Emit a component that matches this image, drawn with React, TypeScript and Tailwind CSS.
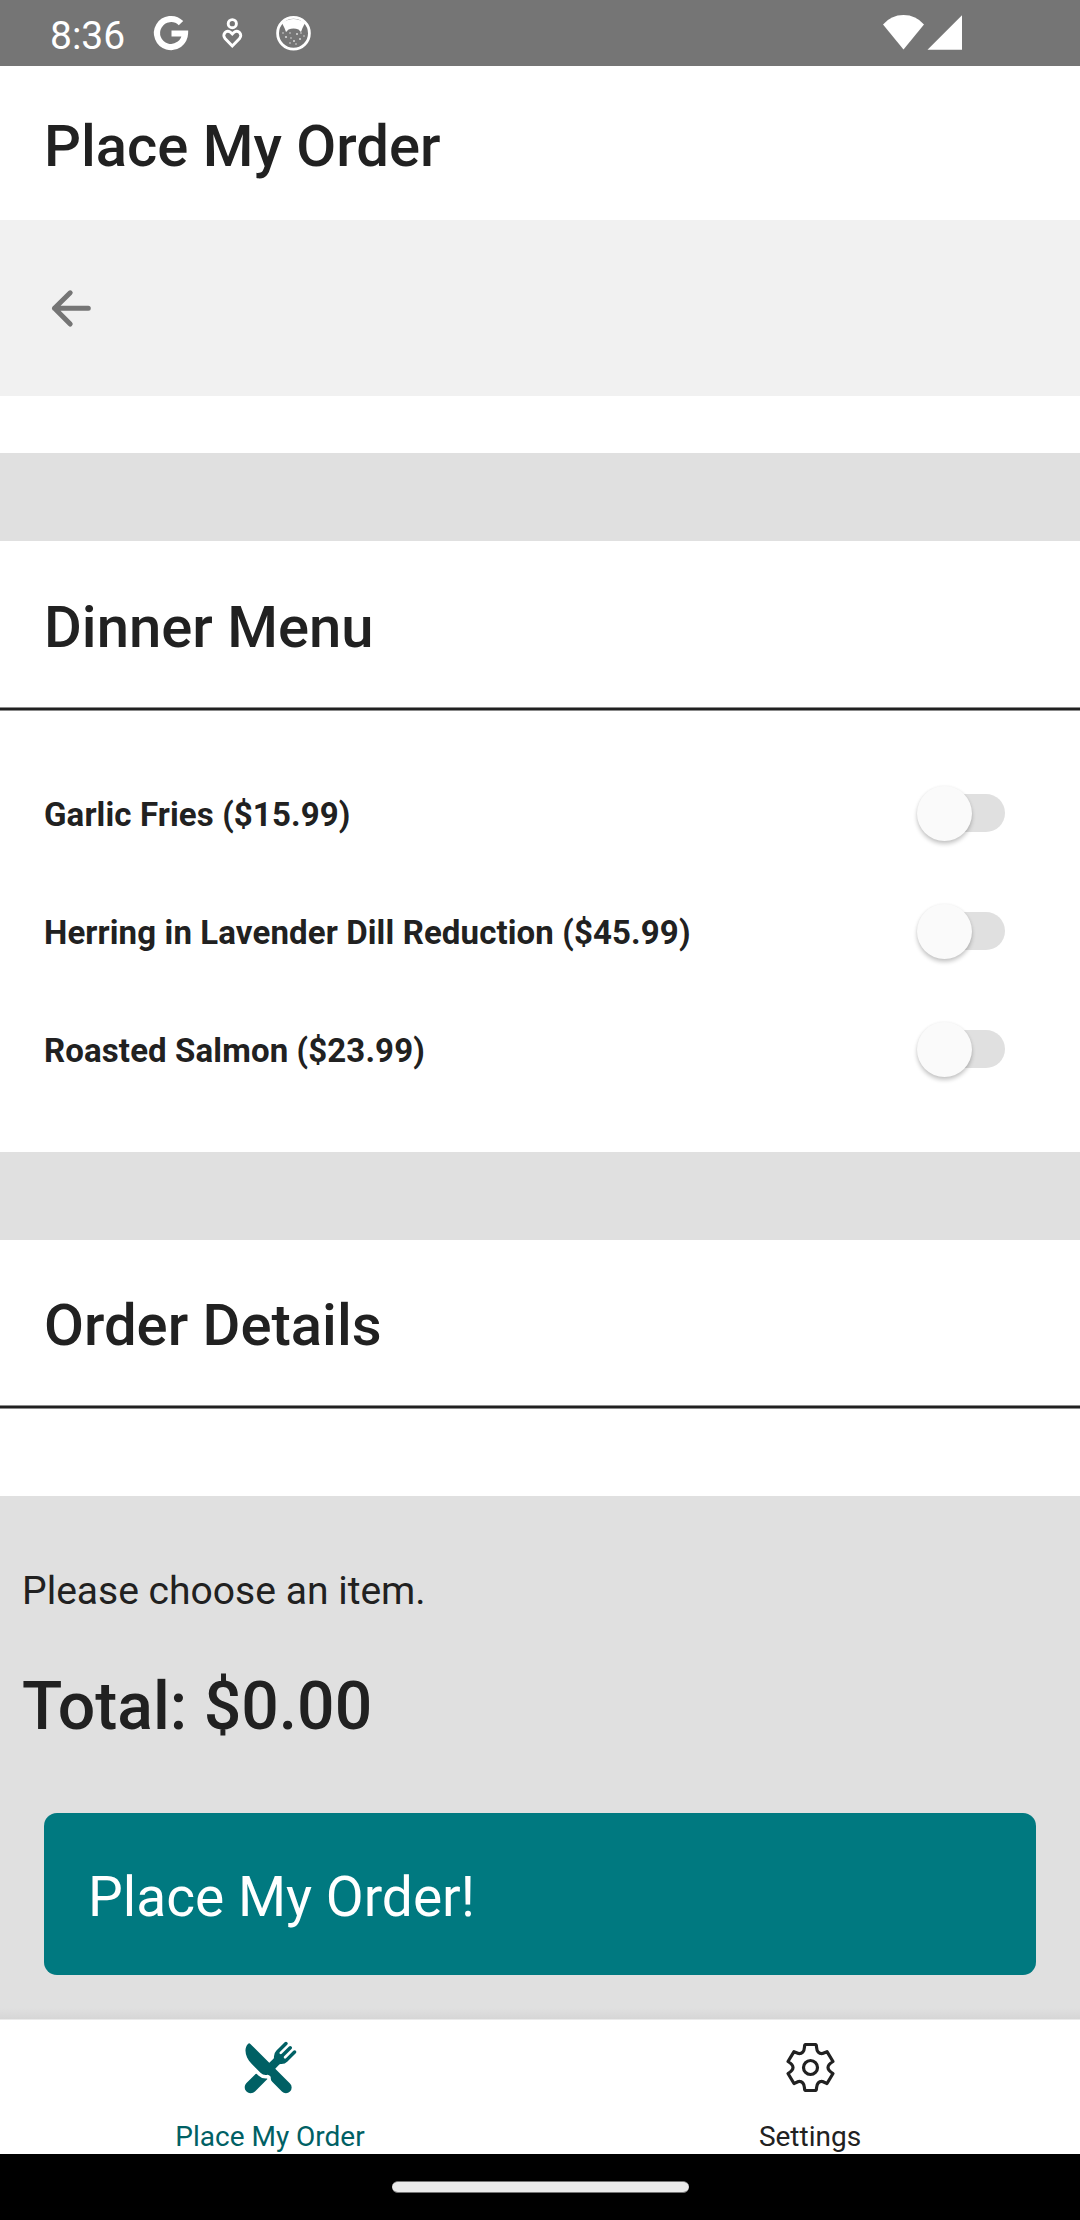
import { IoRestaurant } from "react-icons/io5";

function StatusBar() {
  return (
    <div className="flex h-[66px] items-start bg-[#757575] pl-[50px] text-white">
      <span className="mt-[12px] w-[76px] whitespace-nowrap text-[39px] leading-[48px]">8:36</span>
      <svg className="ml-[26px] mt-[14px] h-[38px] w-[38px]" viewBox="0 0 38 38" fill="none" stroke="white" strokeWidth="6.2">
        <path d="M29 9.2A14 14 0 1 0 33 19.5H19.5" />
      </svg>
      <svg className="ml-[30px] mt-[16px] h-[34px] w-[24px]" viewBox="0 0 24 34" fill="none" stroke="white" strokeWidth="2.9">
        <circle cx="12.3" cy="7.7" r="4.1" />
        <path d="M12.3 30L5 22.4C1.4 18.5 6.8 12.8 10.8 16.5L12.3 18L13.8 16.5C17.8 12.8 23.2 18.5 19.6 22.4Z" />
      </svg>
      <svg className="ml-[30px] mt-[14px] h-[38px] w-[38px]" viewBox="0 0 38 38" fill="none">
        <circle cx="19.5" cy="19.3" r="15.9" stroke="white" strokeWidth="2.8" />
        <path
          fill="white"
          d="M8 9Q19.5 1 31 9L28.5 14L27 18L24.5 15.5Q19.5 13.5 14.500 15.5L12 18L10.500 14L8 9Z"
        />
        <g fill="#d8d8d8">
          <circle cx="9" cy="19" r=".8" />
          <circle cx="12" cy="23" r="1.1" />
          <circle cx="16" cy="19" r=".8" />
          <circle cx="17" cy="24" r=".8" />
          <circle cx="20" cy="27" r="1" />
          <circle cx="23" cy="20" r="1" />
          <circle cx="22" cy="30" r=".8" />
          <circle cx="27" cy="19" r=".8" />
          <circle cx="26" cy="25" r="1" />
          <circle cx="30" cy="22" r=".8" />
          <circle cx="16" cy="29" r=".8" />
        </g>
      </svg>
      <svg className="ml-[569px] mt-[14px] h-[38px] w-[82px]" viewBox="0 0 82 38" fill="white">
        <path d="M22.5 35.5L2 10.5Q10 1 22.5 1T43 10.5Z" />
        <path d="M46.5 35.700H81V1.3Z" />
      </svg>
    </div>
  );
}

function SectionTitle({ children }: { children: string }) {
  return (
    <h2 className="h-[166px] pl-[44px] pt-[52px] text-[58px] font-medium leading-[68px]">
      {children}
    </h2>
  );
}

function Divider() {
  return <div className="h-[4px] border-y border-[#8b8b8b] bg-[#212121]" />;
}

function MenuRow({ label }: { label: string }) {
  return (
    <li className="flex h-[118px] items-center justify-between pl-[44px] pr-[75px]">
      <span className="mt-[4px] text-[33px] font-bold leading-[40px] tracking-[0.12px]">{label}</span>
      <span className="flex h-[38px] w-[79px] items-center rounded-full bg-[#e0e0e0]">
        <span className="-ml-[9px] size-[55px] shrink-0 rounded-full bg-[#fafafa] shadow-[0_3px_4px_rgba(0,0,0,0.22),0_0_3px_rgba(0,0,0,0.05)]" />
      </span>
    </li>
  );
}

const items = [
  "Garlic Fries ($15.99)",
  "Herring in Lavender Dill Reduction ($45.99)",
  "Roasted Salmon ($23.99)",
];

export default function App() {
  return (
    <div className="flex h-[2220px] w-[1080px] flex-col overflow-hidden bg-white font-['Roboto',sans-serif] text-[#212121]">
      <StatusBar />
      <h1 className="h-[154px] pl-[44px] pt-[46px] text-[58px] font-medium leading-[68px]">
        Place My Order
      </h1>
      <div className="h-[176px] bg-[#f1f1f1] pl-[44px] pt-[61px]">
        <svg className="h-[54px] w-[54px]" viewBox="0 0 54 54" fill="none" stroke="#757575" strokeWidth="5" strokeLinecap="round" strokeLinejoin="round">
          <path d="M26.2 11.8L10.5 27.3L26.2 43M10.5 27.3H44.3" />
        </svg>
      </div>
      <div className="h-[57px]" />
      <div className="h-[88px] bg-[#e0e0e0]" />
      <SectionTitle>Dinner Menu</SectionTitle>
      <Divider />
      <ul className="h-[441px] pt-[43px]">
        {items.map((item) => (
          <MenuRow key={item} label={item} />
        ))}
      </ul>
      <div className="h-[88px] bg-[#e0e0e0]" />
      <div className="-mt-px">
        <SectionTitle>Order Details</SectionTitle>
      </div>
      <Divider />
      <div className="h-[87px]" />
      <div className="h-[523px] bg-[#e0e0e0] bg-[linear-gradient(to_top,#d6d6d6,#e0e0e0_11px)]">
        <p className="pl-[22px] pt-[68px] text-[39.05px] leading-[54px]">Please choose an item.</p>
        <p className="pl-[22px] pt-[51px] text-[66.1px] font-medium leading-[76px]">Total: $0.00</p>
        <button className="ml-[44px] mt-[68px] flex h-[162px] w-[992px] items-center rounded-[13px] bg-[#007980] pl-[44px] pt-[5px] text-[55.125px] leading-[66px] text-white">
          Place My Order!
        </button>
      </div>
      <nav className="grid h-[135px] grid-cols-2 border-t border-[#ebebeb] bg-white">
        <div className="flex flex-col items-center text-[#006064]">
          <IoRestaurant className="mt-[20px] size-[55px]" />
          <span className="mt-[25px] text-[28px] leading-[34px]">Place My Order</span>
        </div>
        <div className="flex flex-col items-center">
          <svg className="mt-[20px] size-[55px]" viewBox="0 0 55 55" fill="none" stroke="#212121" strokeWidth="3.2" strokeLinejoin="round">
            <circle cx="27.5" cy="27.5" r="7" />
            <path d="M22.5 4.5H32.5Q33.5 4.5 33.5 7Q34 14 39.5 13.5L44 11.7L50 21.5Q45 24.5 45 27.5T50 33.5L44 43.5L39.5 41.5Q34 41 33.5 48Q33.5 50.5 32.5 50.5H22.5Q21.5 50.5 21.5 48Q21 41 15.5 41.5L11 43.5L5 33.5Q10 30.5 10 27.5T5 21.5L11 11.7L15.5 13.5Q21 14 21.5 7Q21.5 4.5 22.5 4.5Z" />
          </svg>
          <span className="mt-[25px] text-[28px] leading-[34px]">Settings</span>
        </div>
      </nav>
      <div className="flex h-[66px] items-center justify-center bg-black">
        <div className="h-[12px] w-[297px] rounded-full border-y border-[#757575] bg-[#ebebeb]" />
      </div>
    </div>
  );
}
